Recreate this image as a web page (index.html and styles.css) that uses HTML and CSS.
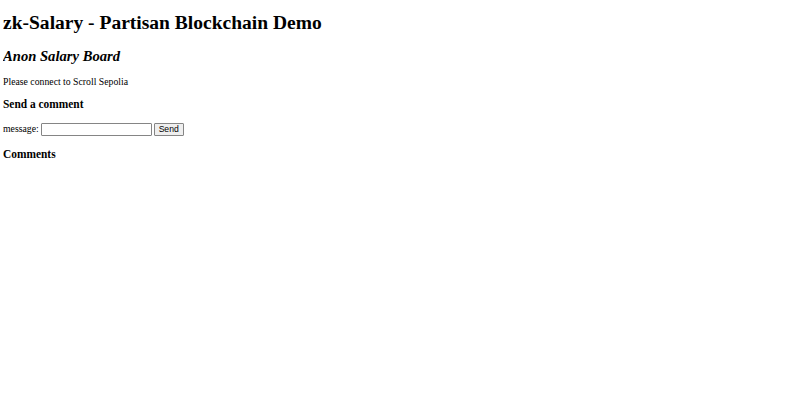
FILE: index.html
```html
<!DOCTYPE html>
<html>
<head>
<meta charset="utf-8">
<title>zk-Salary</title>
<link rel="stylesheet" href="styles.css">
</head>
<body class="page">
<h1 class="title">zk-Salary - Partisan Blockchain Demo</h1>
<h2 class="subtitle"><i>Anon Salary Board</i></h2>
<p class="status">Please connect to Scroll Sepolia</p>
<h3 class="section">Send a comment</h3>
<form class="send-form">
<label class="label">message: <input class="msg-input" type="text"></label>
<button class="send-btn" type="button">Send</button>
</form>
<h3 class="section">Comments</h3>
</body>
</html>
```
FILE: styles.css
```css
html { background: #fff; }
.page {
  margin: 3px;
  font-family: "Liberation Serif", "Times New Roman", serif;
  font-size: 9.76px;
  color: #000;
}
.title { font-size: 19.52px; margin: 9px 0 14px; font-weight: bold; }
.subtitle { font-size: 14.64px; margin: 12.15px 0 11px; font-weight: bold; }
.status { margin: 9.76px 0; }
.section { font-size: 11.42px; margin: 11.42px 0; font-weight: bold; }
.send-form { margin: 0; padding: 1px 0 1px; }
.msg-input {
  font-family: "Liberation Sans", Arial, sans-serif;
  font-size: 8.13px;
  width: 107px;
  height: 9px;
  padding: 1px 1px;
  border: 1px solid #858585;
  border-radius: 1px;
  vertical-align: baseline;
  box-sizing: content-box;
}
.send-btn {
  font-family: "Liberation Sans", Arial, sans-serif;
  font-size: 8.6px;
  padding: 1px 4px;
  margin-left: -1px;
  border: 1px solid #858585;
  border-radius: 1px;
  background: #efefef;
  color: #000;
  height: 13px;
  line-height: 9px;
}
```
